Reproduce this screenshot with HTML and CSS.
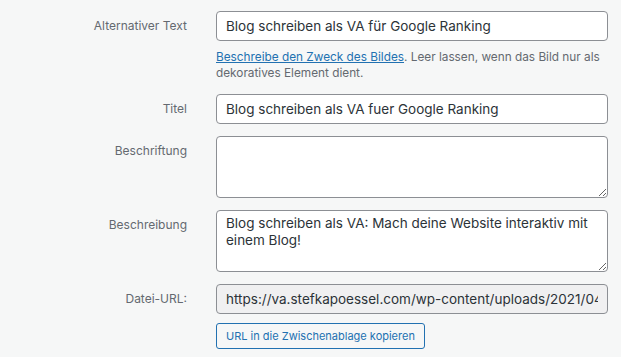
FILE: index.html
```html
<!DOCTYPE html>
<html lang="de">
<head>
    <meta charset="UTF-8">
    <meta name="viewport" content="width=device-width, initial-scale=1.0">
    <title>Anhang-Details</title>
    <link rel="stylesheet" href="styles.css">
</head>
<body>
    <div class="settings">
        <label class="setting-label" for="altText">Alternativer Text</label>
        <div class="setting-field">
            <input type="text" id="altText" value="Blog schreiben als VA für Google Ranking">
            <p class="description"><a href="#">Beschreibe den Zweck des Bildes</a>. Leer lassen, wenn das Bild nur als dekoratives Element dient.</p>
        </div>

        <label class="setting-label" for="title">Titel</label>
        <div class="setting-field">
            <input type="text" id="title" value="Blog schreiben als VA fuer Google Ranking">
        </div>

        <label class="setting-label label-top" for="caption">Beschriftung</label>
        <div class="setting-field">
            <textarea id="caption"></textarea>
        </div>

        <label class="setting-label label-top" for="description">Beschreibung</label>
        <div class="setting-field">
            <textarea id="description">Blog schreiben als VA: Mach deine Website interaktiv mit einem Blog!</textarea>
        </div>

        <label class="setting-label" for="fileUrl">Datei-URL:</label>
        <div class="setting-field">
            <input type="text" id="fileUrl" class="readonly" readonly value="https://va.stefkapoessel.com/wp-content/uploads/2021/04/blog-schreiben-als-va.jpg">
            <button class="copy-btn">URL in die Zwischenablage kopieren</button>
        </div>
    </div>
</body>
</html>
```

FILE: styles.css
```css
body {
    font-family: Inter, "Liberation Sans", Arial, sans-serif;
    background-color: #f6f7f7;
    margin: 0;
    padding: 0;
    color: #1d2327;
}
.settings {
    display: grid;
    grid-template-columns: 187px 1fr;
    column-gap: 29px;
    row-gap: 12px;
    padding: 11px 13px 0 0;
}
.setting-label {
    text-align: right;
    font-size: 12px;
    color: #646970;
    line-height: 30px;
}
.label-top {
    line-height: 16px;
    padding-top: 7px;
}
.setting-field {
    display: flex;
    flex-direction: column;
    align-items: flex-start;
}
input, textarea {
    width: 100%;
    box-sizing: border-box;
    font-family: inherit;
    font-size: 13.5px;
    color: #2c3338;
    background-color: white;
    border: 1px solid #8c8f94;
    border-radius: 4px;
    margin: 0;
}
input {
    height: 30px;
    padding: 0 9px;
}
textarea {
    height: 62px;
    padding: 4px 9px;
    line-height: 17px;
    display: block;
}
input.readonly {
    background-color: #f0f0f1;
}
.description {
    margin: 8px 0 1px;
    font-size: 11.8px;
    line-height: 16px;
    color: #646970;
}
.description a {
    color: #2271b1;
}
.copy-btn {
    margin-top: 9px;
    height: 26px;
    padding: 0 9px;
    font-family: inherit;
    font-size: 11px;
    color: #2271b1;
    background-color: #f6f7f7;
    border: 1px solid #2271b1;
    border-radius: 3px;
    cursor: pointer;
}
```
